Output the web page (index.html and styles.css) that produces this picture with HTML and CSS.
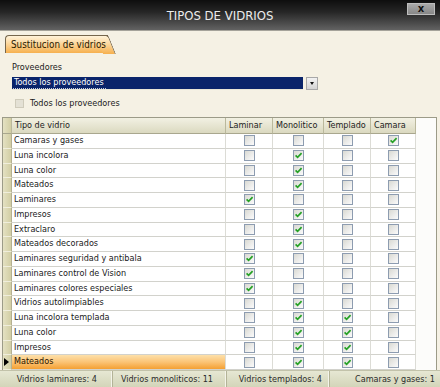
FILE: index.html
```html
<!DOCTYPE html>
<html lang="es">
<head>
<meta charset="utf-8">
<title>Tipos de vidrios</title>
<link rel="stylesheet" href="styles.css">
</head>
<body>
<div class="window">
  <header class="titlebar">
    <span></span>
    <h1 class="title">TIPOS DE VIDRIOS</h1>
    <div class="close-wrap"><span class="close">x</span></div>
  </header>

  <div class="tabstrip"><div class="tab">Sustitucion de vidrios</div></div>

  <div class="panel">
    <div class="lbl">Proveedores</div>
    <div class="combo-row">
      <div class="combo"><span class="combo-text">Todos los proveedores</span></div>
      <div class="combo-btn"><span class="arrow"></span></div>
    </div>
    <div class="chk-row"><span class="chk-dis"></span><span>Todos los proveedores</span></div>
  </div>

  <div class="grid">
    <div class="row head">
      <div class="sel"></div><div class="name">Tipo de vidrio</div><div class="c">Laminar</div><div class="c">Monolitico</div><div class="c">Templado</div><div class="c">Camara</div><div class="fill"></div>
    </div>
    <div class="row"><div class="sel"></div><div class="name">Camaras y gases</div><div class="c"><span class="cb"></span></div><div class="c"><span class="cb"></span></div><div class="c"><span class="cb"></span></div><div class="c"><span class="cb on"><svg viewBox="0 0 9 9"><path d="M1.6 4.4L3.6 6.4L7.6 2.2"/></svg></span></div><div class="fill"></div></div>
    <div class="row"><div class="sel"></div><div class="name">Luna incolora</div><div class="c"><span class="cb"></span></div><div class="c"><span class="cb on"><svg viewBox="0 0 9 9"><path d="M1.6 4.4L3.6 6.4L7.6 2.2"/></svg></span></div><div class="c"><span class="cb"></span></div><div class="c"><span class="cb"></span></div><div class="fill"></div></div>
    <div class="row"><div class="sel"></div><div class="name">Luna color</div><div class="c"><span class="cb"></span></div><div class="c"><span class="cb on"><svg viewBox="0 0 9 9"><path d="M1.6 4.4L3.6 6.4L7.6 2.2"/></svg></span></div><div class="c"><span class="cb"></span></div><div class="c"><span class="cb"></span></div><div class="fill"></div></div>
    <div class="row"><div class="sel"></div><div class="name">Mateados</div><div class="c"><span class="cb"></span></div><div class="c"><span class="cb on"><svg viewBox="0 0 9 9"><path d="M1.6 4.4L3.6 6.4L7.6 2.2"/></svg></span></div><div class="c"><span class="cb"></span></div><div class="c"><span class="cb"></span></div><div class="fill"></div></div>
    <div class="row"><div class="sel"></div><div class="name">Laminares</div><div class="c"><span class="cb on"><svg viewBox="0 0 9 9"><path d="M1.6 4.4L3.6 6.4L7.6 2.2"/></svg></span></div><div class="c"><span class="cb"></span></div><div class="c"><span class="cb"></span></div><div class="c"><span class="cb"></span></div><div class="fill"></div></div>
    <div class="row"><div class="sel"></div><div class="name">Impresos</div><div class="c"><span class="cb"></span></div><div class="c"><span class="cb on"><svg viewBox="0 0 9 9"><path d="M1.6 4.4L3.6 6.4L7.6 2.2"/></svg></span></div><div class="c"><span class="cb"></span></div><div class="c"><span class="cb"></span></div><div class="fill"></div></div>
    <div class="row"><div class="sel"></div><div class="name">Extraclaro</div><div class="c"><span class="cb"></span></div><div class="c"><span class="cb on"><svg viewBox="0 0 9 9"><path d="M1.6 4.4L3.6 6.4L7.6 2.2"/></svg></span></div><div class="c"><span class="cb"></span></div><div class="c"><span class="cb"></span></div><div class="fill"></div></div>
    <div class="row"><div class="sel"></div><div class="name">Mateados decorados</div><div class="c"><span class="cb"></span></div><div class="c"><span class="cb on"><svg viewBox="0 0 9 9"><path d="M1.6 4.4L3.6 6.4L7.6 2.2"/></svg></span></div><div class="c"><span class="cb"></span></div><div class="c"><span class="cb"></span></div><div class="fill"></div></div>
    <div class="row"><div class="sel"></div><div class="name">Laminares seguridad y antibala</div><div class="c"><span class="cb on"><svg viewBox="0 0 9 9"><path d="M1.6 4.4L3.6 6.4L7.6 2.2"/></svg></span></div><div class="c"><span class="cb"></span></div><div class="c"><span class="cb"></span></div><div class="c"><span class="cb"></span></div><div class="fill"></div></div>
    <div class="row"><div class="sel"></div><div class="name">Laminares control de Vision</div><div class="c"><span class="cb on"><svg viewBox="0 0 9 9"><path d="M1.6 4.4L3.6 6.4L7.6 2.2"/></svg></span></div><div class="c"><span class="cb"></span></div><div class="c"><span class="cb"></span></div><div class="c"><span class="cb"></span></div><div class="fill"></div></div>
    <div class="row"><div class="sel"></div><div class="name">Laminares colores especiales</div><div class="c"><span class="cb on"><svg viewBox="0 0 9 9"><path d="M1.6 4.4L3.6 6.4L7.6 2.2"/></svg></span></div><div class="c"><span class="cb"></span></div><div class="c"><span class="cb"></span></div><div class="c"><span class="cb"></span></div><div class="fill"></div></div>
    <div class="row"><div class="sel"></div><div class="name">Vidrios autolimpiables</div><div class="c"><span class="cb"></span></div><div class="c"><span class="cb on"><svg viewBox="0 0 9 9"><path d="M1.6 4.4L3.6 6.4L7.6 2.2"/></svg></span></div><div class="c"><span class="cb"></span></div><div class="c"><span class="cb"></span></div><div class="fill"></div></div>
    <div class="row"><div class="sel"></div><div class="name">Luna incolora templada</div><div class="c"><span class="cb"></span></div><div class="c"><span class="cb on"><svg viewBox="0 0 9 9"><path d="M1.6 4.4L3.6 6.4L7.6 2.2"/></svg></span></div><div class="c"><span class="cb on"><svg viewBox="0 0 9 9"><path d="M1.6 4.4L3.6 6.4L7.6 2.2"/></svg></span></div><div class="c"><span class="cb"></span></div><div class="fill"></div></div>
    <div class="row"><div class="sel"></div><div class="name">Luna color</div><div class="c"><span class="cb"></span></div><div class="c"><span class="cb on"><svg viewBox="0 0 9 9"><path d="M1.6 4.4L3.6 6.4L7.6 2.2"/></svg></span></div><div class="c"><span class="cb on"><svg viewBox="0 0 9 9"><path d="M1.6 4.4L3.6 6.4L7.6 2.2"/></svg></span></div><div class="c"><span class="cb"></span></div><div class="fill"></div></div>
    <div class="row"><div class="sel"></div><div class="name">Impresos</div><div class="c"><span class="cb"></span></div><div class="c"><span class="cb on"><svg viewBox="0 0 9 9"><path d="M1.6 4.4L3.6 6.4L7.6 2.2"/></svg></span></div><div class="c"><span class="cb on"><svg viewBox="0 0 9 9"><path d="M1.6 4.4L3.6 6.4L7.6 2.2"/></svg></span></div><div class="c"><span class="cb"></span></div><div class="fill"></div></div>
    <div class="row current"><div class="sel"><span class="pointer"></span></div><div class="name">Mateados</div><div class="c"><span class="cb"></span></div><div class="c"><span class="cb on"><svg viewBox="0 0 9 9"><path d="M1.6 4.4L3.6 6.4L7.6 2.2"/></svg></span></div><div class="c"><span class="cb on"><svg viewBox="0 0 9 9"><path d="M1.6 4.4L3.6 6.4L7.6 2.2"/></svg></span></div><div class="c"><span class="cb"></span></div><div class="fill"></div></div>
  </div>

  <footer class="status">
    <div class="st st1">Vidrios laminares: 4</div>
    <div class="st st2">Vidrios monoliticos: 11</div>
    <div class="st st3">Vidrios templados: 4</div>
    <div class="st st4">Camaras y gases: 1</div>
  </footer>
</div>
</body>
</html>
```

FILE: styles.css
```css
html, body {
  margin: 0;
  padding: 0;
}
body {
  width: 440px;
  height: 387px;
  overflow: hidden;
  background: #f5f1e4;
  font-family: "DejaVu Sans Condensed", "Liberation Sans", sans-serif;
  font-size: 9px;
  color: #1a1a1a;
}
.window {
  display: flex;
  flex-direction: column;
  height: 387px;
}

/* title bar */
.titlebar {
  box-sizing: border-box;
  height: 31px;
  display: grid;
  grid-template-columns: 1fr auto 1fr;
  align-items: center;
  background: linear-gradient(#0e0e0e 0%, #262626 40%, #626262 100%);
  border-bottom: 1px solid #a5a39a;
}
.title {
  margin: 0;
  font-size: 13px;
  font-weight: normal;
  color: #ececec;
  line-height: 1;
  padding-top: 1px;
}
.close-wrap {
  justify-self: end;
  align-self: start;
  margin: 3px 5px 0 0;
}
.close {
  box-sizing: border-box;
  display: flex;
  align-items: center;
  justify-content: center;
  width: 28px;
  height: 12px;
  background: linear-gradient(#a9a9a9, #878787);
  border: 1px solid #bdbdbd;
  color: #111;
  font-family: "DejaVu Sans", sans-serif;
  font-weight: bold;
  font-size: 10px;
  line-height: 1;
}

/* tab */
.tabstrip {
  box-sizing: border-box;
  height: 22px;
  padding: 4px 0 0 5px;
}
.tab {
  position: relative;
  z-index: 1;
  display: inline-block;
  box-sizing: border-box;
  height: 18px;
  line-height: 17px;
  padding: 0 2px 0 5px;
  white-space: nowrap;
  font-size: 9.8px;
  color: #2a1a00;
  background: linear-gradient(#fff3da 0%, #fcd79c 45%, #f6b04e 100%);
  border: 1px solid #75664c;
  border-right: none;
  border-bottom: none;
  border-radius: 4px 0 0 0;
}
.tab::after {
  content: "";
  position: absolute;
  top: -1px;
  right: -8px;
  width: 12px;
  height: 18px;
  background: linear-gradient(#fff3da 0%, #fcd79c 45%, #f6b04e 100%);
  border-top: 1px solid #75664c;
  border-right: 1px solid #75664c;
  border-radius: 0 3px 0 0;
  transform: skewX(22deg);
  transform-origin: bottom left;
  z-index: -1;
}

/* provider filter */
.panel {
  padding-left: 12px;
}
.lbl {
  margin-top: 8px;
  height: 12px;
  line-height: 12px;
}
.combo-row {
  display: flex;
  margin-top: 4px;
  height: 13px;
}
.combo {
  box-sizing: border-box;
  width: 291px;
  height: 13px;
  background: #0a246a;
  border-bottom: 1px solid #e9e6d6;
  padding: 0 0 0 1px;
  color: #fff;
  line-height: 11px;
}
.combo-text {
  display: inline-block;
  padding: 0 2px 0 1px;
  border-bottom: 1px dotted #c6cde0;
}
.combo-btn {
  box-sizing: border-box;
  margin-left: 3px;
  width: 12px;
  height: 13px;
  background: linear-gradient(#f2f2f2, #d4d4d4);
  border: 1px solid #a8a8a8;
  display: flex;
  align-items: center;
  justify-content: center;
}
.arrow {
  width: 0;
  height: 0;
  border-left: 2px solid transparent;
  border-right: 2px solid transparent;
  border-top: 3px solid #111;
}
.chk-row {
  margin-top: 7px;
  height: 12px;
  display: flex;
  align-items: center;
  gap: 6px;
  padding-left: 3px;
}
.chk-dis {
  box-sizing: border-box;
  width: 9px;
  height: 9px;
  background: #e4e1d5;
  border: 1px solid #cfcbbb;
}

/* grid */
.grid {
  margin: 8px 3px 0 2px;
  flex: 1;
  background: #fcfcfa;
  border: 1px solid #9c9b88;
  border-bottom: none;
}
.row {
  box-sizing: border-box;
  display: grid;
  grid-template-columns: 9px 214px 47px 51px 47px 45px 1fr;
  height: 14.75px;
}
.row > div {
  box-sizing: border-box;
  border-right: 1px solid #dcdcd6;
  border-bottom: 1px solid #d2d2cc;
  background: #fff;
}
.row > .fill {
  background: transparent;
  border: none;
}
.row > .sel {
  background: linear-gradient(90deg, #e4e1c2, #d2cea4);
  border-right: 1px solid #b4b092;
  border-bottom: 1px solid #f0eedc;
  display: flex;
  align-items: center;
}
.name {
  padding-left: 2px;
  line-height: 13px;
  white-space: nowrap;
  overflow: hidden;
}
.c {
  display: flex;
  align-items: center;
  justify-content: center;
}
.row.head {
  height: 16px;
}
.row.head > div {
  background: linear-gradient(#f2f1e3, #dbd9c0);
  border-right: 1px solid #bab89c;
  border-bottom: 1px solid #a9a78e;
  line-height: 15px;
  padding-left: 3px;
  justify-content: flex-start;
  color: #222;
}
.row.head > .sel {
  padding: 0;
  background: linear-gradient(90deg, #e4e1c2, #d2cea4);
}
.row.head > .fill {
  background: transparent;
  border: none;
}
.row.current > .name {
  background: linear-gradient(#fde0aa 0%, #fbc476 50%, #f4a033 100%);
  color: #2a1400;
}
.pointer {
  width: 0;
  height: 0;
  margin-left: 1px;
  border-top: 4px solid transparent;
  border-bottom: 4px solid transparent;
  border-left: 5px solid #000;
}

/* checkbox */
.cb {
  box-sizing: border-box;
  width: 11px;
  height: 11px;
  border: 1px solid #8d9cb0;
  background: linear-gradient(135deg, #d9d9d2 0%, #ececea 55%, #fbfbfb 100%);
  display: block;
}
.cb svg {
  display: block;
  width: 9px;
  height: 9px;
}
.cb path {
  fill: none;
  stroke: #25a125;
  stroke-width: 1.7;
}

/* status bar */
.status {
  height: 17px;
  display: grid;
  grid-template-columns: 113px 114px 103px 1fr;
  background: linear-gradient(#e6e7d3, #d3d5b9);
  border-top: 1px solid #c2c2aa;
  box-sizing: border-box;
  color: #2b2b2b;
}
.st {
  text-align: right;
  line-height: 16px;
  white-space: nowrap;
  border-right: 1px solid #b3b397;
  box-shadow: inset -1px 0 0 #f4f4ea;
}
.st1 { padding-right: 15px; }
.st2 { padding-right: 13px; }
.st3 { padding-right: 7px; }
.st4 { padding-right: 5px; border-right: none; box-shadow: none; }
```
